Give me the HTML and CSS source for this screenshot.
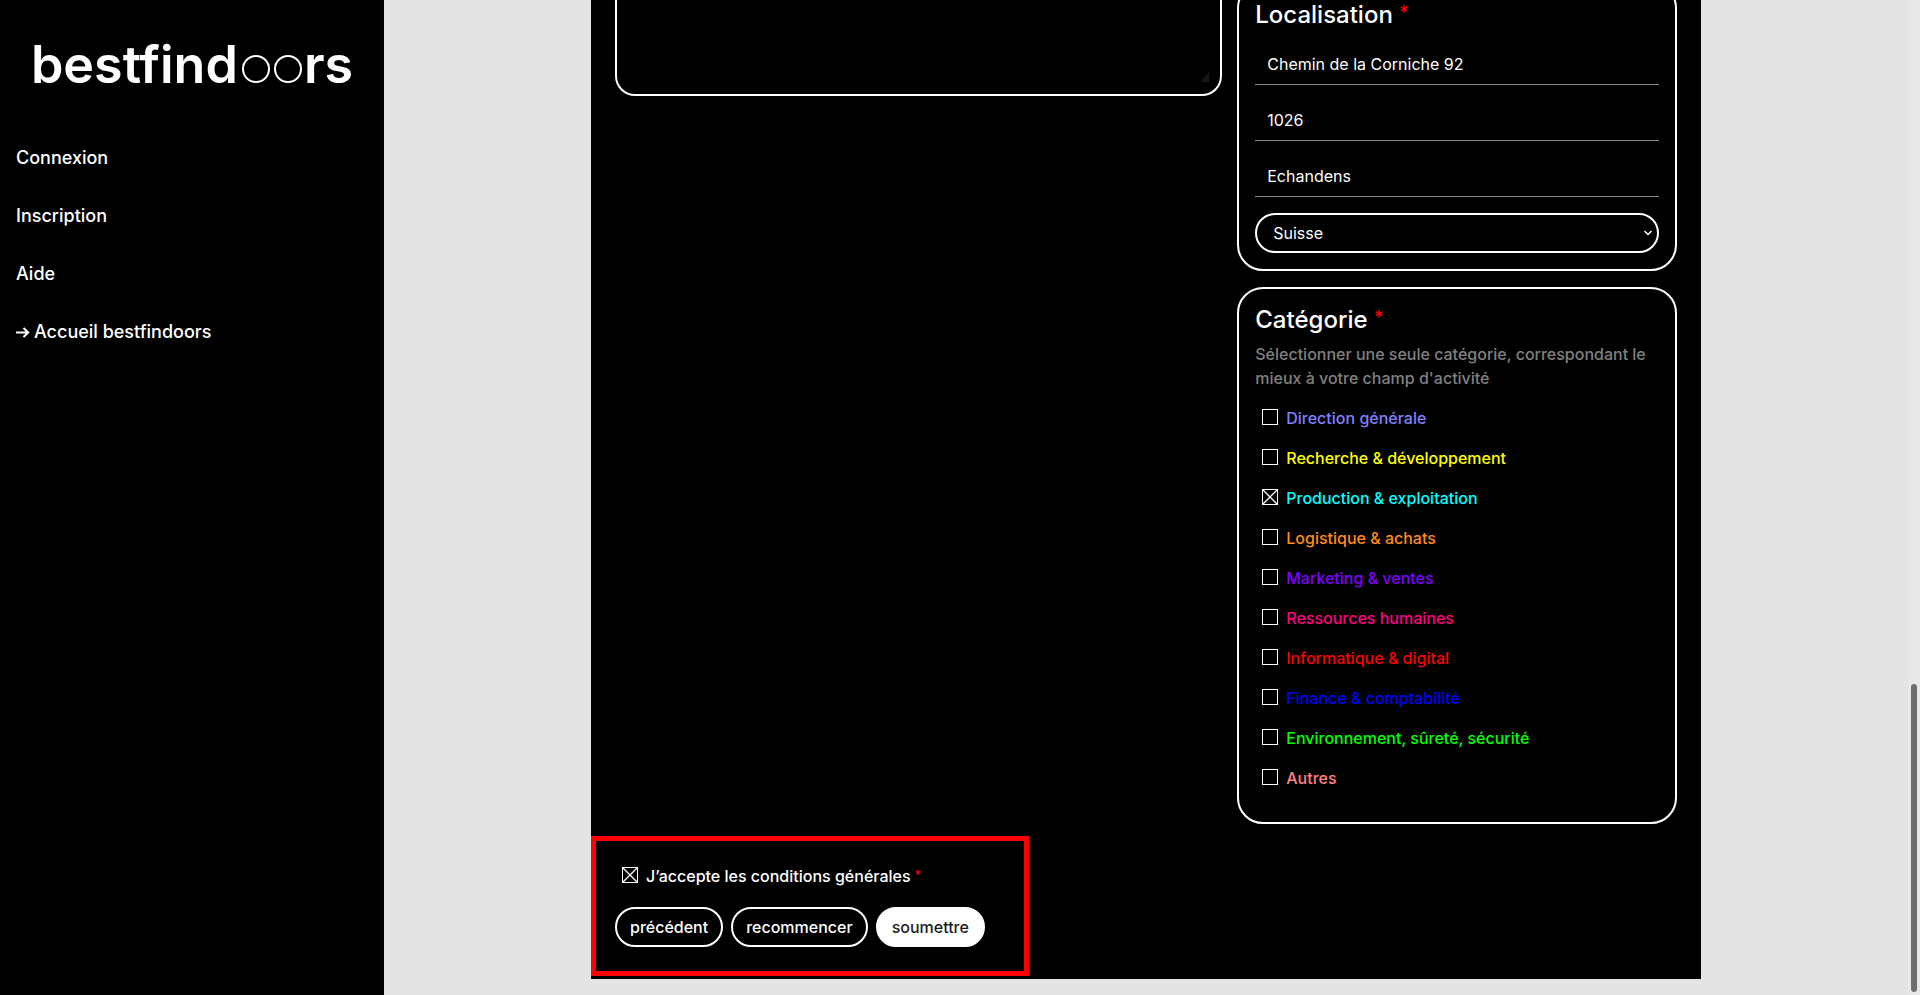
FILE: index.html
```html
<!DOCTYPE html>
<html lang="fr">
<head>
<meta charset="utf-8">
<title>bestfindoors</title>
<link rel="stylesheet" href="styles.css">
</head>
<body>
<aside class="sidebar">
  <a class="logo" href="#" aria-label="bestfindoors"><span>bestfind</span><i class="ring"></i><i class="ring"></i><span>rs</span></a>
  <nav class="nav">
    <a href="#">Connexion</a>
    <a href="#">Inscription</a>
    <a href="#">Aide</a>
    <a href="#"><svg class="arrow" viewBox="0 0 14 12" aria-hidden="true"><path d="M0 6.500H12M7.500 2L12.200 6.500L7.500 11"/></svg>Accueil bestfindoors</a>
  </nav>
</aside>
<main class="main">
  <form class="panel">
    <div class="columns">
      <div class="editor">
        <textarea class="editor-text" aria-label="Description"></textarea>
        <svg class="grip" viewBox="0 0 10 10" aria-hidden="true"><path d="M9 0V10H0Z"/></svg>
      </div>
      <div class="side">
        <section class="card">
          <h2 class="title">Localisation <span class="required">*</span></h2>
          <div class="fields">
            <input class="field" type="text" aria-label="Adresse" value="Chemin de la Corniche 92">
            <input class="field" type="text" aria-label="Code postal" value="1026">
            <input class="field" type="text" aria-label="Ville" value="Echandens">
            <div class="select-wrap">
              <select class="select" aria-label="Pays"><option>Suisse</option></select>
              <svg class="chevron" viewBox="0 0 10 10" aria-hidden="true"><path d="M1.500 3L5 6.500L8.500 3"/></svg>
            </div>
          </div>
        </section>
        <section class="card">
          <h2 class="title">Catégorie <span class="required">*</span></h2>
          <p class="hint">Sélectionner une seule catégorie, correspondant le mieux à votre champ d'activité</p>
          <div class="options">
            <label class="option direction"><input class="check" type="checkbox">Direction générale</label>
            <label class="option recherche"><input class="check" type="checkbox">Recherche &amp; développement</label>
            <label class="option production"><input class="check" type="checkbox" checked>Production &amp; exploitation</label>
            <label class="option logistique"><input class="check" type="checkbox">Logistique &amp; achats</label>
            <label class="option marketing"><input class="check" type="checkbox">Marketing &amp; ventes</label>
            <label class="option ressources"><input class="check" type="checkbox">Ressources humaines</label>
            <label class="option informatique"><input class="check" type="checkbox">Informatique &amp; digital</label>
            <label class="option finance"><input class="check" type="checkbox">Finance &amp; comptabilité</label>
            <label class="option environnement"><input class="check" type="checkbox">Environnement, sûreté, sécurité</label>
            <label class="option autres"><input class="check" type="checkbox">Autres</label>
          </div>
        </section>
      </div>
    </div>
    <div class="footer">
      <label class="option"><input class="check" type="checkbox" checked><span>J’accepte les conditions générales <span class="required">*</span></span></label>
      <div class="actions">
        <button class="button" type="button">précédent</button>
        <button class="button" type="reset">recommencer</button>
        <button class="button primary" type="submit">soumettre</button>
      </div>
      <div class="highlight"></div>
    </div>
  </form>
</main>
<div class="scrollbar"><div class="thumb"></div></div>
</body>
</html>
```
FILE: styles.css
```css
* { box-sizing: border-box; }

body {
  margin: 0;
  display: grid;
  grid-template-columns: 20% 1fr 12px;
  height: 100vh;
  overflow: hidden;
  background: #e4e4e4;
  color: #fff;
  font: 500 16px/24px Inter, "Liberation Sans", sans-serif;
}

/* Sidebar */
.sidebar { background: #000; padding: 32px 16px; }
.sidebar a { color: #fff; text-decoration: none; }
.logo {
  display: flex;
  align-items: baseline;
  justify-content: center;
  font-size: 52px;
  line-height: 66px;
  font-weight: 600;
}
.ring {
  width: 28px;
  height: 28px;
  margin-left: 4px;
  border: 2px solid #fff;
  border-radius: 50%;
}
.ring + span { margin-left: 2px; }
.nav {
  display: flex;
  flex-direction: column;
  gap: 34px;
  margin-top: 48px;
  font-size: 18px;
}
.nav a { display: flex; align-items: center; gap: 4px; }
.arrow { width: 14px; height: 12px; fill: none; stroke: #fff; stroke-width: 2; }

/* Form panel */
.main { display: flex; justify-content: center; align-items: flex-start; }
.panel {
  width: 100%;
  max-width: 1110px;
  padding: 0 24px 32px;
  background: #000;
}
.columns {
  display: grid;
  grid-template-columns: 58fr 42fr;
  align-items: start;
  gap: 15px;
  margin-top: -18px;
}
.editor { position: relative; }
.editor-text {
  display: block;
  width: 100%;
  height: 114px;
  border: 2px solid #fff;
  border-top: 0;
  border-radius: 0 0 20px 20px;
  background: #000;
  color: #fff;
  font: inherit;
  resize: none;
  outline: 0;
}
.grip { position: absolute; right: 12px; bottom: 14px; width: 10px; height: 10px; fill: #161616; }
.side { display: flex; flex-direction: column; gap: 16px; }
.card { padding: 16px; border: 2px solid #fff; border-radius: 26px; }
.title { margin: 0; font-size: 24px; line-height: 29px; font-weight: 500; }
.required { color: #f00; font-size: 12px; line-height: 1; vertical-align: 3px; }
.title .required { font-size: 18px; vertical-align: 4px; }

.fields { display: flex; flex-direction: column; gap: 16px; margin-top: 16px; }
.field {
  width: 100%;
  height: 40px;
  padding: 0 12px 2px;
  border: 0;
  border-bottom: 1px solid #8c8c8c;
  background: none;
  color: #fff;
  font: 400 16px/24px Inter, "Liberation Sans", sans-serif;
}
.select-wrap { position: relative; }
.select {
  display: block;
  width: 100%;
  height: 40px;
  padding: 0 16px;
  border: 2px solid #fff;
  border-radius: 20px;
  appearance: none;
  background: #000;
  color: #fff;
  font: 400 16px/24px Inter, "Liberation Sans", sans-serif;
}
.chevron {
  position: absolute;
  right: 6px;
  top: 15px;
  width: 10px;
  height: 10px;
  fill: none;
  stroke: #fff;
  stroke-width: 1.5;
  pointer-events: none;
}

.hint { margin: 8px 0; color: #808080; }
.options { margin-bottom: 8px; }
.option { display: flex; align-items: center; gap: 8px; height: 40px; padding-left: 7px; }
.check {
  width: 16px;
  height: 16px;
  margin: 0 0 2px;
  border: 1px solid #fff;
  appearance: none;
}
.check:checked {
  background:
    linear-gradient(45deg, transparent 46%, #fff 47%, #fff 53%, transparent 54%),
    linear-gradient(-45deg, transparent 46%, #fff 47%, #fff 53%, transparent 54%);
}
.direction { color: #8080ff; }
.recherche { color: #ff0; }
.production { color: #0ff; }
.logistique { color: #ff8c1a; }
.marketing { color: #8000ff; }
.ressources { color: #ff0080; }
.informatique { color: #f00; }
.finance { color: #00f; }
.environnement { color: #0f0; }
.autres { color: #ff8080; }

/* Consent and actions */
.footer { position: relative; padding-top: 32px; }
.actions { display: flex; gap: 8px; margin-top: 11px; }
.button {
  height: 40px;
  padding: 0 13px;
  border: 2px solid #fff;
  border-radius: 20px;
  background: #000;
  color: #fff;
  font: inherit;
}
.primary { padding: 0 14px; background: #fff; color: #1c1c1c; }
.highlight {
  position: absolute;
  left: -24px;
  top: 12px;
  width: 438px;
  height: 140px;
  border: 5px solid #f00;
  pointer-events: none;
}

.scrollbar { display: flex; flex-direction: column; justify-content: flex-end; align-items: center; padding-bottom: 3px; background: #e8e8e8; }
.thumb { width: 6px; height: 31%; border-radius: 3px; background: #6f6f6f; }
```
